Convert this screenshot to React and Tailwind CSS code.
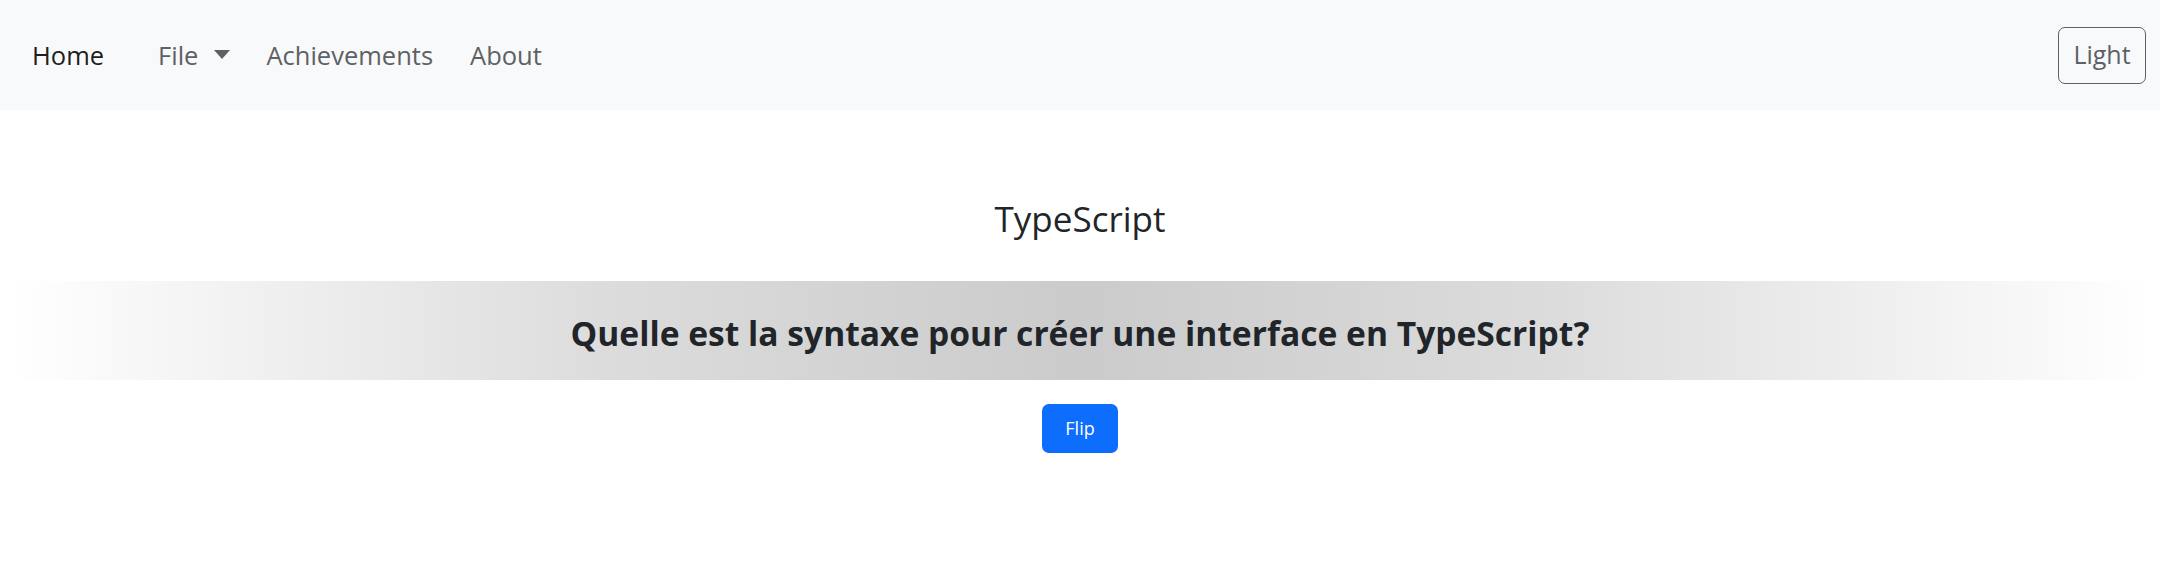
import React, { useState } from "react";

const font = { fontFamily: '"Open Sans", "Noto Sans", sans-serif' };

export default function App() {
  const [flipped, setFlipped] = useState(false);
  const [theme, setTheme] = useState("Light");

  return (
    <div className="min-h-screen bg-white text-[#212529]" style={font}>
      {/* Navbar */}
      <nav className="h-[110px] bg-[#f8f9fa] flex items-center justify-between pl-[32px] pr-[14px]">
        <div className="flex items-center text-[25.5px]">
          <a className="text-black/90 mr-[54px]">Home</a>
          <div className="flex items-center gap-[16px] mr-[36px] text-[#5e6164]">
            <span>File</span>
            <svg width="16" height="10" viewBox="0 0 16 10">
              <path d="M0 0 L16 0 L8 9 Z" fill="#5e6164" />
            </svg>
          </div>
          <a className="text-[#5e6164] mr-[37px]">Achievements</a>
          <a className="text-[#5e6164]">About</a>
        </div>
        <button
          onClick={() => setTheme(theme === "Light" ? "Dark" : "Light")}
          className="w-[88px] h-[57px] border border-[#5c6166] rounded-[7px] text-[25px] text-[#5c6166] flex items-center justify-center"
        >
          {theme}
        </button>
      </nav>

      {/* Card */}
      <div className="flex flex-col items-center">
        <h3 className="mt-[86px] h-[85px] text-[35px] leading-[46px] font-medium">TypeScript</h3>
        <div className="mx-[8px] self-stretch h-[99px] flex items-center justify-center pt-[5px] bg-[linear-gradient(90deg,#ffffff_0%,#dcdcdc_28%,#cbcbcb_50%,#dcdcdc_72%,#ffffff_100%)]">
          <p className="text-[33.6px] font-bold">
            {flipped ? "interface Nom { propriete: type; }" : "Quelle est la syntaxe pour créer une interface en TypeScript?"}
          </p>
        </div>
        <button
          onClick={() => setFlipped(!flipped)}
          className="mt-[24px] w-[76px] h-[49px] bg-[#0d6efd] text-white text-[18px] rounded-[7px]"
        >
          Flip
        </button>
      </div>
    </div>
  );
}
